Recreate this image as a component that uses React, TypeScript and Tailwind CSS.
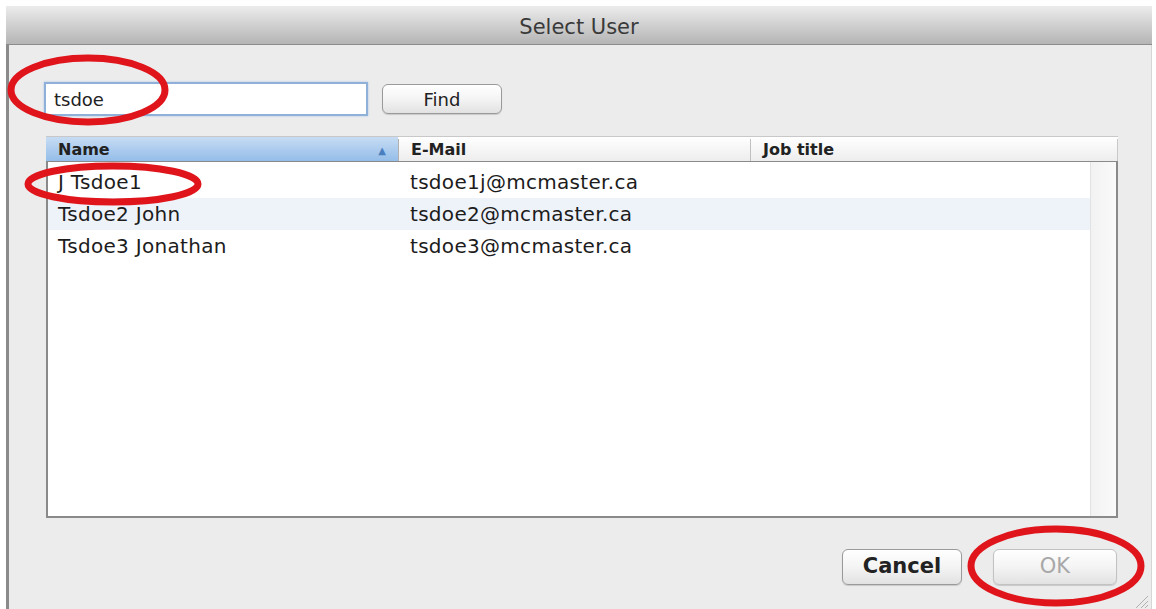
import React from 'react';

type Person = { name: string; email: string; title: string };

const people: Person[] = [
  { name: 'J Tsdoe1', email: 'tsdoe1j@mcmaster.ca', title: '' },
  { name: 'Tsdoe2 John', email: 'tsdoe2@mcmaster.ca', title: '' },
  { name: 'Tsdoe3 Jonathan', email: 'tsdoe3@mcmaster.ca', title: '' },
];

const font = { fontFamily: '"DejaVu Sans", "Noto Sans", sans-serif' };

const AquaButton: React.FC<{ label: string; dim?: boolean; className?: string }> = ({ label, dim, className }) => (
  <button
    className={`flex items-center justify-center rounded-[6px] border bg-gradient-to-b from-[#ffffff] via-[#f4f4f4] to-[#e2e2e2] shadow-[0_1px_1px_rgba(0,0,0,0.15)] ${
      dim ? 'text-[#a8a8a8] border-[#c2c2c2]' : 'text-[#222] border-[#9a9a9a]'
    } ${className ?? ''}`}
  >
    {label}
  </button>
);

export default function App() {
  return (
    <div className="relative w-[1156px] h-[609px] bg-white overflow-hidden pt-[6px]" style={font}>
      <div className="ml-[6px] w-[1146px] h-[603px] flex flex-col">
        {/* title bar */}
        <div className="h-[39px] pt-[5px] flex items-center justify-center bg-gradient-to-b from-[#ececec] to-[#b5b5b5] border-b border-[#8c8c8c] text-[#3a3a3a] text-[21px]">
          Select User
        </div>

        <div className="flex-1 bg-[#ececec] border-l-[3px] border-[#8a8a8a] border-r border-r-[#d6d6d6] pl-[35px] pt-[37px] relative">
          {/* search row */}
          <div className="flex items-center gap-[14px]">
            <div className="w-[324px] h-[34px] border-[2px] border-[#8fb0d8] bg-white flex items-center px-[8px] text-[18px] text-[#222] shadow-[0_0_2px_#a9c4e6]">
              tsdoe
            </div>
            <AquaButton label="Find" className="w-[120px] h-[30px] text-[18px]" />
          </div>

          {/* result table */}
          <div className="ml-[2px] mt-[20px] w-[1072px] h-[382px] flex flex-col">
            <div className="h-[26px] pt-[2px] flex text-[16px] font-semibold text-[#222] border-t border-[#c8c8c8] border-b border-b-[#8a8a8a] bg-gradient-to-b from-white to-[#ededed]">
              <div className="w-[352px] -mt-[2px] flex items-center justify-between pl-[12px] pr-[12px] pt-[2px] bg-gradient-to-b from-[#c7dcf3] to-[#94bde9]">
                <span>Name</span>
                <span className="text-[#4a7fbf] text-[10px]">▲</span>
              </div>
              <div className="w-[352px] flex items-center pl-[12px] border-l border-[#b0b0b0]">
                E-Mail
              </div>
              <div className="flex-1 flex items-center pl-[12px] border-l border-[#c0c0c0] border-r border-r-[#c8c8c8]">
                Job title
              </div>
            </div>
            <div className="flex-1 flex bg-white border-l-[2px] border-r-[2px] border-b-[2px] border-[#8a8a8a]">
              <div className="flex-1 pt-[4px] text-[20px] tracking-[0.3px] text-[#1c1c1c]">
                {people.map((p, i) => (
                  <div key={p.email} className={`h-[32px] flex items-center ${i === 1 ? 'bg-[#eef3f9]' : 'bg-white'}`}>
                    <div className="w-[350px] pl-[10px]">{p.name}</div>
                    <div className="w-[352px] pl-[12px]">{p.email}</div>
                    <div className="flex-1 pl-[12px]">{p.title}</div>
                  </div>
                ))}
              </div>
              <div className="w-[26px] bg-gradient-to-r from-[#f2f2f2] to-[#fafafa] border-l border-[#e2e2e2]" />
            </div>
          </div>

          {/* action buttons */}
          <div className="w-[1073px] mt-[31px] flex justify-end gap-[31px]">
            <AquaButton label="Cancel" className="w-[120px] h-[36px] text-[21px] font-semibold" />
            <AquaButton label="OK" dim className="w-[124px] h-[36px] text-[21px]" />
          </div>

          {/* resize grip */}
          <svg className="absolute right-[2px] bottom-0" width="18" height="18" viewBox="0 0 18 18">
            <path d="M17 5 L5 17 M17 10 L10 17 M17 14 L14 17" stroke="#b0b0b0" strokeWidth="1" />
          </svg>
        </div>
      </div>

      {/* red annotation marks */}
      <svg className="absolute inset-0 pointer-events-none" width="1156" height="609" viewBox="0 0 1156 609">
        <g fill="none" stroke="#e0141b" strokeWidth="7">
          <ellipse cx="88" cy="90" rx="77" ry="32" />
          <ellipse cx="113" cy="184" rx="85" ry="18" />
          <ellipse cx="1056" cy="566" rx="85" ry="37" />
        </g>
      </svg>
    </div>
  );
}
